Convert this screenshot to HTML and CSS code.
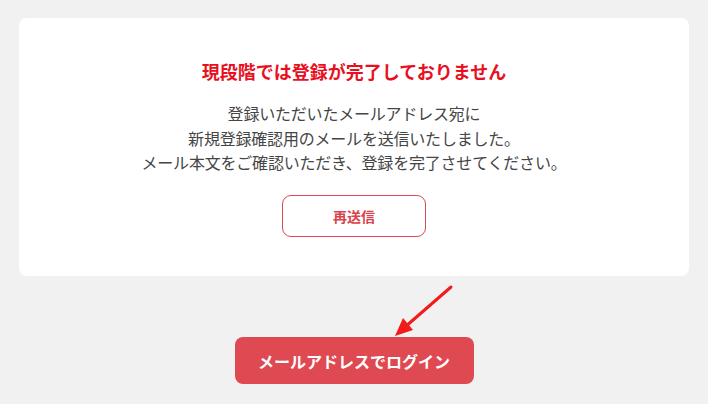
FILE: index.html
```html
<!DOCTYPE html>
<html lang="ja">
<head>
<meta charset="utf-8">
<link rel="stylesheet" href="styles.css">
</head>
<body>
<main class="page">
  <section class="card">
    <h1 class="title">現段階では登録が完了しておりません</h1>
    <p class="message">登録いただいたメールアドレス宛に<br>新規登録確認用のメールを送信いたしました。<br>メール本文をご確認いただき、登録を完了させてください。</p>
    <button class="resend" type="button">再送信</button>
  </section>
  <div class="login-area">
    <svg class="arrow" width="64" height="56" viewBox="0 0 64 56">
      <line x1="58" y1="3" x2="12" y2="43" stroke="#f21a1a" stroke-width="3" stroke-linecap="round"/>
      <polygon points="2,52 10,34 20,46" fill="#f21a1a"/>
    </svg>
    <button class="login" type="button">メールアドレスでログイン</button>
  </div>
</main>
</body>
</html>
```
FILE: styles.css
```css
* { box-sizing: border-box; }
html, body {
  margin: 0;
  padding: 0;
  background: #f1f1f1;
  font-family: "Noto Sans CJK JP", "Noto Sans", sans-serif;
}
.page {
  padding: 18px 19px 0;
  display: flex;
  flex-direction: column;
  align-items: center;
}
.card {
  width: 670px;
  height: 258px;
  background: #ffffff;
  border-radius: 8px;
  padding-top: 44px;
  display: flex;
  flex-direction: column;
  align-items: center;
}
.title {
  margin: 0;
  font-size: 18px;
  line-height: 18px;
  font-weight: 700;
  color: #e8101e;
  letter-spacing: 0;
}
.message {
  margin: 21px 0 0;
  font-size: 16px;
  line-height: 24.5px;
  color: #454545;
  text-align: center;
  letter-spacing: -0.2px;
}
.resend {
  margin-top: 20px;
  width: 144px;
  height: 42px;
  border: 1px solid #e0474f;
  border-radius: 9px;
  background: #ffffff;
  color: #d9434b;
  font-family: inherit;
  font-size: 14px;
  font-weight: 700;
  padding: 0;
}
.login-area {
  position: relative;
  margin-top: 61px;
  width: 239px;
  display: flex;
  justify-content: center;
}
.arrow {
  position: absolute;
  left: 158px;
  top: -53px;
}
.login {
  width: 239px;
  height: 47px;
  border: none;
  border-radius: 8px;
  background: #df4a52;
  color: #ffffff;
  font-family: inherit;
  font-size: 16px;
  font-weight: 700;
  padding: 0;
}
```
